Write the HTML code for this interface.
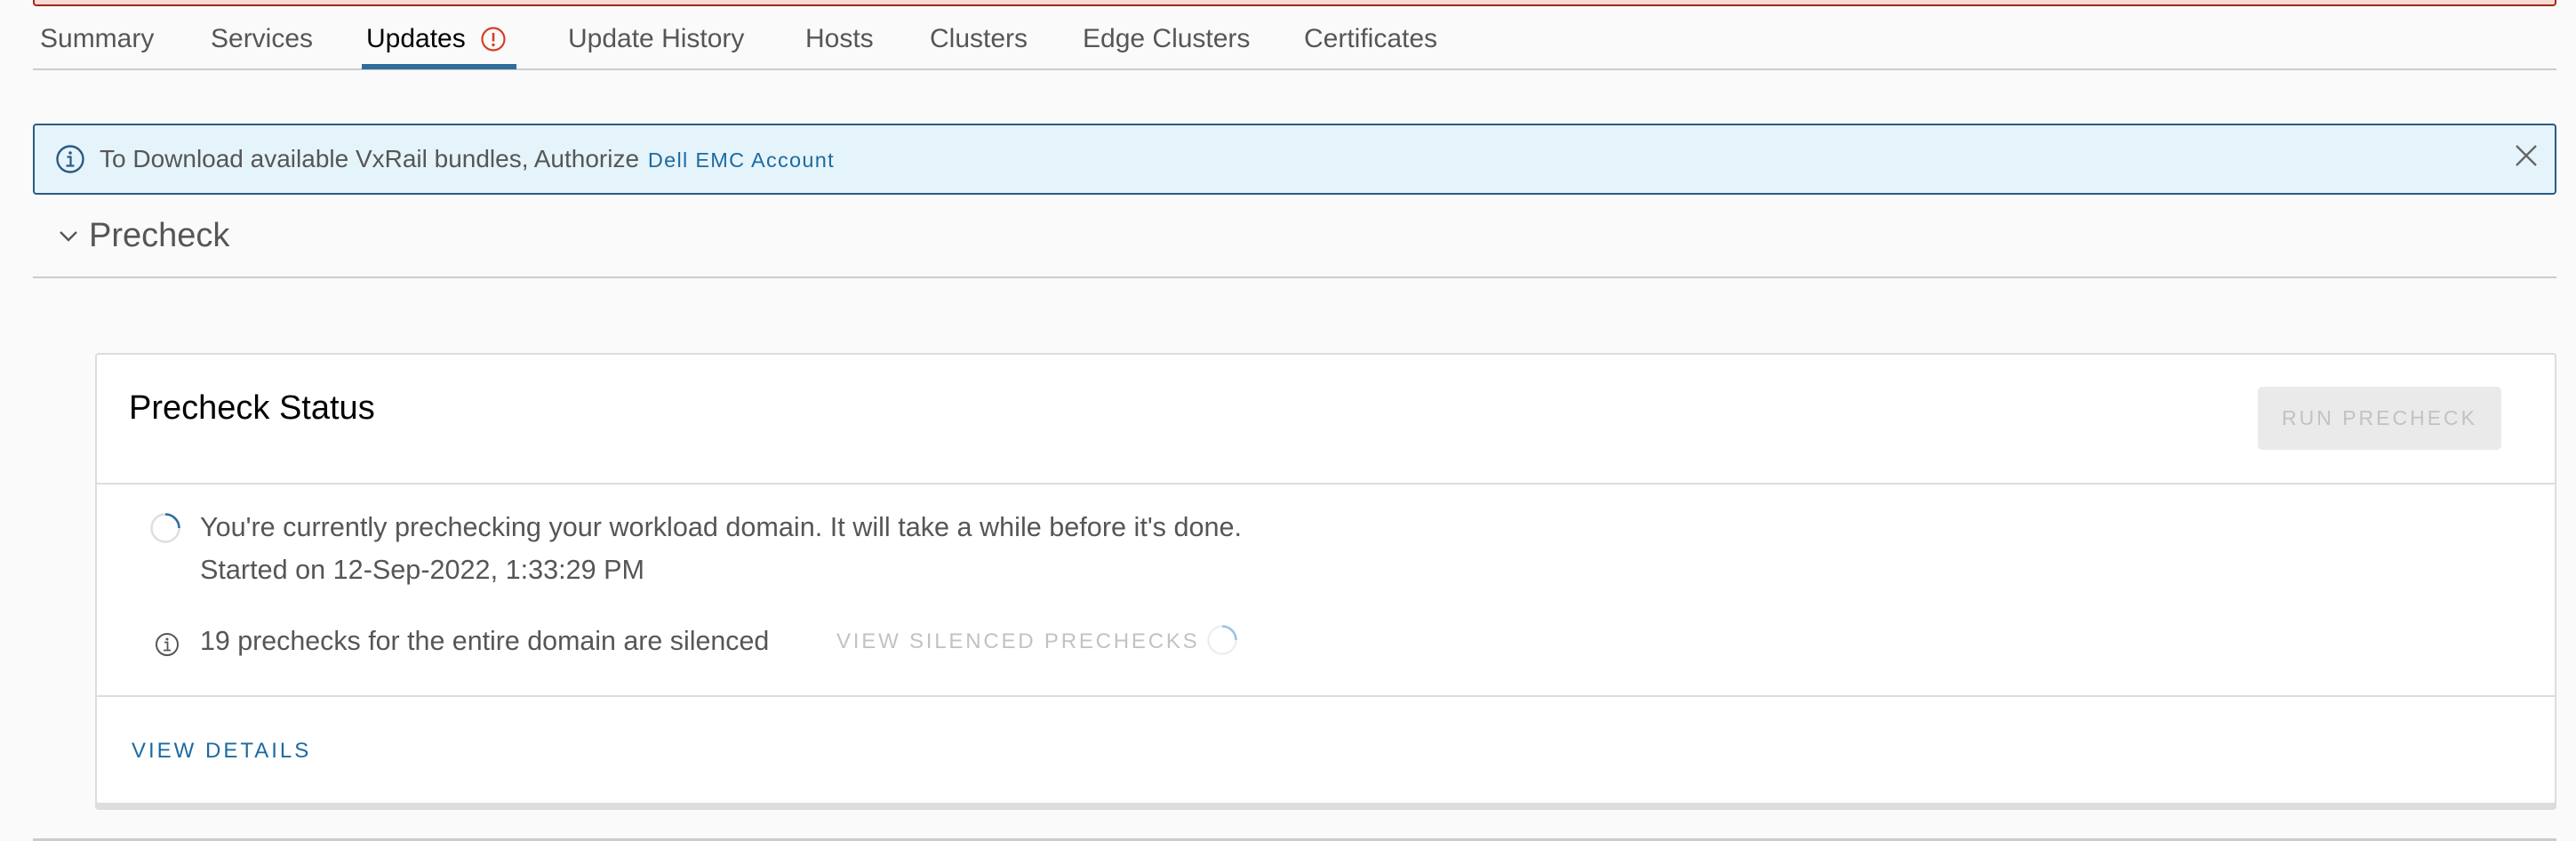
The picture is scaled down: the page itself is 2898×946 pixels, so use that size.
<!DOCTYPE html>
<html><head><meta charset="utf-8"><style>
*{margin:0;padding:0;box-sizing:border-box}
html,body{width:2898px;height:946px;overflow:hidden;background:#fafafa;font-family:"Liberation Sans",sans-serif;color:#565656}
.a{position:absolute;white-space:nowrap}
.tab{position:absolute;top:26px;font-size:30px;line-height:36px;color:#565656}
</style></head><body>
<div class="a" style="left:37px;top:-20px;width:2839px;height:27px;background:#fadad5;border:2px solid #9e2a16;border-radius:4px"></div>

<div class="tab" style="left:45px">Summary</div>
<div class="tab" style="left:237px">Services</div>
<div class="tab" style="left:412px;color:#000">Updates</div>
<svg class="a" style="left:540px;top:29px" width="30" height="30" viewBox="0 0 30 30"><circle cx="15" cy="15" r="12.5" fill="none" stroke="#d63f24" stroke-width="2.2"/><line x1="15" y1="8" x2="15" y2="17.5" stroke="#d63f24" stroke-width="2.6"/><circle cx="15" cy="21.5" r="1.7" fill="#d63f24"/></svg>
<div class="tab" style="left:639px">Update History</div>
<div class="tab" style="left:906px">Hosts</div>
<div class="tab" style="left:1046px">Clusters</div>
<div class="tab" style="left:1218px">Edge Clusters</div>
<div class="tab" style="left:1467px">Certificates</div>
<div class="a" style="left:37px;top:77px;width:2839px;height:2px;background:#ccc"></div>
<div class="a" style="left:407px;top:72px;width:174px;height:6px;background:#2f6d9c"></div>

<div class="a" style="left:37px;top:139px;width:2839px;height:80px;background:#e5f4fb;border:2px solid #2b5b80;border-radius:4px"></div>
<svg class="a" style="left:62px;top:162px" width="34" height="34" viewBox="0 0 34 34"><circle cx="17" cy="17" r="14.5" fill="none" stroke="#2b5b80" stroke-width="2.4"/><circle cx="17" cy="10" r="1.8" fill="#2b5b80"/><path d="M13.5 14.5h4v10M12.5 24.5h9" fill="none" stroke="#2b5b80" stroke-width="2.2"/></svg>
<div class="a" style="left:112px;top:161px;font-size:28px;line-height:36px">To Download available VxRail bundles, Authorize <span style="color:#1d6aa0;font-size:23.5px;letter-spacing:1.3px;margin-left:2px">Dell EMC Account</span></div>
<svg class="a" style="left:2829px;top:162px" width="26" height="26" viewBox="0 0 26 26"><path d="M2 2L24 24M24 2L2 24" stroke="#666" stroke-width="2.4"/></svg>

<svg class="a" style="left:66px;top:258px" width="22" height="16" viewBox="0 0 22 16"><path d="M2 3l9 9 9-9" fill="none" stroke="#565656" stroke-width="2.4"/></svg>
<div class="a" style="left:100px;top:242px;font-size:38px;line-height:46px;color:#565656">Precheck</div>
<div class="a" style="left:37px;top:311px;width:2839px;height:2px;background:#ccc"></div>

<div class="a" style="left:107px;top:397px;width:2769px;height:508px;background:#fff;border:2px solid #ddd;border-radius:4px;box-shadow:0 6px 0 #ddd"></div>
<div class="a" style="left:145px;top:436px;font-size:38px;line-height:46px;color:#000">Precheck Status</div>
<div class="a" style="left:2540px;top:435px;width:274px;height:71px;background:#eaeaea;border-radius:5px;font-size:23px;line-height:71px;text-align:center;color:#c2c2c2;letter-spacing:3px">RUN PRECHECK</div>
<div class="a" style="left:109px;top:543px;width:2765px;height:2px;background:#ddd"></div>

<svg class="a" style="left:168px;top:576px" width="36" height="36" viewBox="0 0 36 36"><circle cx="18" cy="18" r="15.5" fill="none" stroke="#ddd" stroke-width="2.4"/><path d="M18 2.5A15.5 15.5 0 0 1 33.5 18" fill="none" stroke="#2f6d9c" stroke-width="2.6"/></svg>
<div class="a" style="left:225px;top:574px;font-size:30.6px;line-height:38px">You're currently prechecking your workload domain. It will take a while before it's done.</div>
<div class="a" style="left:225px;top:622px;font-size:30.6px;line-height:38px">Started on 12-Sep-2022, 1:33:29 PM</div>
<svg class="a" style="left:174px;top:711px" width="28" height="28" viewBox="0 0 28 28"><circle cx="14" cy="14" r="12" fill="none" stroke="#565656" stroke-width="2"/><circle cx="14" cy="8" r="1.5" fill="#565656"/><path d="M11 11.5h3.5v9M10 20.5h8" fill="none" stroke="#565656" stroke-width="1.8"/></svg>
<div class="a" style="left:225px;top:702px;font-size:30.4px;line-height:38px">19 prechecks for the entire domain are silenced</div>
<div class="a" style="left:941px;top:705px;font-size:24px;line-height:34px;color:#c2c2c2;letter-spacing:2.8px">VIEW SILENCED PRECHECKS</div>
<svg class="a" style="left:1357px;top:702px" width="36" height="36" viewBox="0 0 36 36"><circle cx="18" cy="18" r="15.5" fill="none" stroke="#eee" stroke-width="2.4"/><path d="M18 2.5A15.5 15.5 0 0 1 33.5 18" fill="none" stroke="#9cc3e0" stroke-width="2.6"/></svg>
<div class="a" style="left:109px;top:782px;width:2765px;height:2px;background:#ddd"></div>
<div class="a" style="left:148px;top:829px;font-size:24px;line-height:32px;color:#1d6aa0;letter-spacing:3px">VIEW DETAILS</div>

<div class="a" style="left:37px;top:943px;width:2839px;height:3px;background:#ccc"></div>
</body></html>
